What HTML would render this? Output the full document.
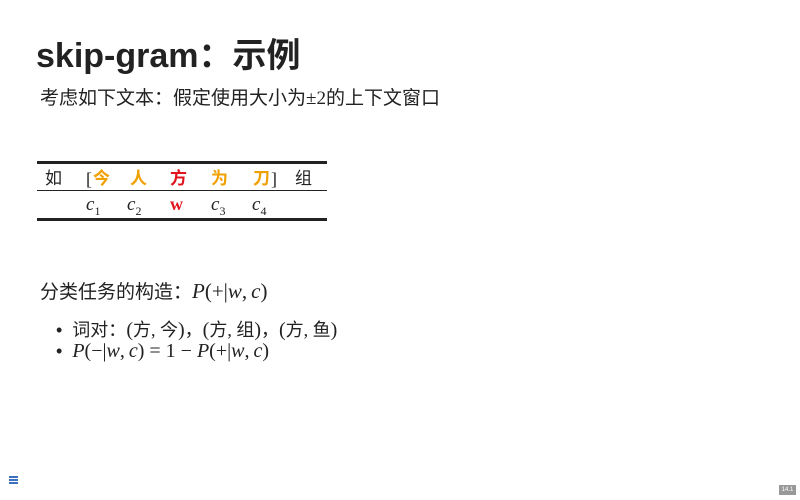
<!DOCTYPE html>
<html><head><meta charset="utf-8"><style>
body{margin:0;width:800px;height:500px;background:#fff;position:relative;overflow:hidden;font-family:"Liberation Sans","Noto Sans CJK SC",sans-serif;color:#222}
.a{position:absolute;white-space:nowrap}
.t{line-height:24px}
.m{font-family:"Liberation Serif","Noto Serif CJK SC",serif;font-style:italic}
.r{font-family:"Liberation Serif","Noto Sans CJK SC",serif}
.o{color:#f0a000;font-weight:bold}
.red{color:#e0141e;font-weight:bold}
.line{position:absolute;left:37px;width:290px;background:#222}
sub{font-size:12px;font-style:normal}
.s{display:inline-block;width:4px}
</style></head><body>
<div class="a" style="left:36px;top:28px;font-size:34px;font-weight:bold;color:#222">skip-gram：示例</div>
<div class="a" style="left:40px;top:83px;font-size:19px">考虑如下文本：假定使用大小为<span class="r">±2</span>的上下文窗口</div>
<div class="line" style="top:161px;height:3px"></div>
<div class="line" style="top:190px;height:1px"></div>
<div class="line" style="top:218px;height:3px"></div>
<div class="a t" style="left:45px;top:167px;font-size:17px">如</div>
<div class="a t r" style="left:86px;top:167px;font-size:18px">[</div>
<div class="a t o" style="left:93px;top:167px;font-size:17px">今</div>
<div class="a t o" style="left:130px;top:167px;font-size:17px">人</div>
<div class="a t red" style="left:170px;top:167px;font-size:17px">方</div>
<div class="a t o" style="left:211px;top:167px;font-size:17px">为</div>
<div class="a t o" style="left:253px;top:167px;font-size:17px">刀</div>
<div class="a t r" style="left:271px;top:167px;font-size:18px">]</div>
<div class="a t" style="left:295px;top:167px;font-size:17px">组</div>
<div class="a m" style="left:86px;top:194px;font-size:19px">c<sub>1</sub></div>
<div class="a m" style="left:127px;top:194px;font-size:19px">c<sub>2</sub></div>
<div class="a r" style="left:170px;top:194px;font-size:18px;color:#e0141e;font-weight:bold">w</div>
<div class="a m" style="left:211px;top:194px;font-size:19px">c<sub>3</sub></div>
<div class="a m" style="left:252px;top:194px;font-size:19px">c<sub>4</sub></div>
<div class="a" style="left:40px;top:277px;font-size:19px">分类任务的构造：<span class="m" style="font-size:21px">P</span><span class="r" style="font-size:21px">(+|</span><span class="m" style="font-size:21px">w</span><span class="r" style="font-size:21px">,<span class="s"></span></span><span class="m" style="font-size:21px">c</span><span class="r" style="font-size:21px">)</span></div>
<div class="a" style="left:56px;top:316px;font-size:18px">•&nbsp; 词对：<span class="r" style="font-size:20px">(</span>方<span class="r">, </span>今<span class="r" style="font-size:20px">)</span>，<span class="r" style="font-size:20px">(</span>方<span class="r">, </span>组<span class="r" style="font-size:20px">)</span>，<span class="r" style="font-size:20px">(</span>方<span class="r">, </span>鱼<span class="r" style="font-size:20px">)</span></div>
<div class="a" style="left:56px;top:340px;font-size:18px">•&nbsp; <span class="m" style="font-size:20px">P</span><span class="r" style="font-size:20px">(−|</span><span class="m" style="font-size:20px">w</span><span class="r" style="font-size:20px">,<span class="s"></span></span><span class="m" style="font-size:20px">c</span><span class="r" style="font-size:20px">)&nbsp;=&nbsp;1&nbsp;−&nbsp;</span><span class="m" style="font-size:20px">P</span><span class="r" style="font-size:20px">(+|</span><span class="m" style="font-size:20px">w</span><span class="r" style="font-size:20px">,<span class="s"></span></span><span class="m" style="font-size:20px">c</span><span class="r" style="font-size:20px">)</span></div>
<div class="a" style="left:9px;top:476px;width:9px;height:2px;background:#3a6fc4;box-shadow:0 3px 0 #3a6fc4,0 6px 0 #3a6fc4"></div>
<div class="a" style="left:779px;top:485px;width:17px;height:10px;background:#999;color:#fff;font-size:6px;text-align:center;line-height:10px">14.1</div>
</body></html>
